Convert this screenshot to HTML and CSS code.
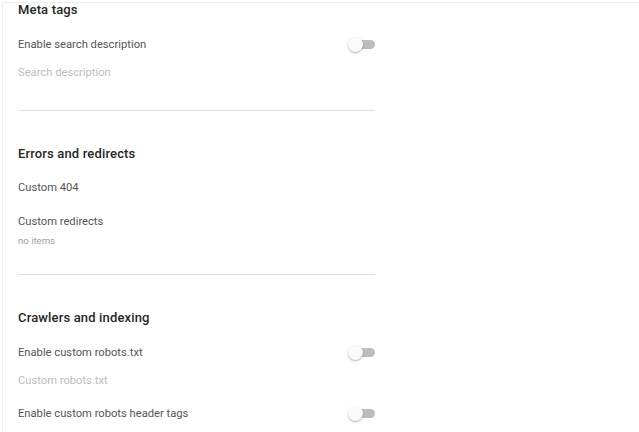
FILE: index.html
```html
<!DOCTYPE html>
<html>
<head>
<meta charset="utf-8">
<link rel="stylesheet" href="styles.css">
</head>
<body>
<div class="card">
  <section class="section">
    <h2 class="title">Meta tags</h2>
    <div class="row gap-13">
      <span class="label">Enable search description</span>
      <span class="toggle"><span class="track"></span><span class="thumb"></span></span>
    </div>
    <div class="row">
      <span class="hint">Search description</span>
    </div>
    <div class="divider d-24"></div>
  </section>
  <section class="section">
    <h2 class="title t-36">Errors and redirects</h2>
    <div class="row gap-12">
      <span class="label">Custom 404</span>
    </div>
    <div class="row gap-6">
      <span class="label">Custom redirects</span>
    </div>
    <div class="sub">no items</div>
    <div class="divider d-27"></div>
  </section>
  <section class="section">
    <h2 class="title t-36">Crawlers and indexing</h2>
    <div class="row gap-13">
      <span class="label">Enable custom robots.txt</span>
      <span class="toggle"><span class="track"></span><span class="thumb"></span></span>
    </div>
    <div class="row">
      <span class="hint">Custom robots.txt</span>
    </div>
    <div class="row gap-5">
      <span class="label">Enable custom robots header tags</span>
      <span class="toggle"><span class="track"></span><span class="thumb"></span></span>
    </div>
  </section>
</div>
</body>
</html>
```

FILE: styles.css
```css
html, body {
  margin: 0;
  padding: 0;
  height: 100%;
  background: #ffffff;
  font-family: Roboto, "Liberation Sans", Arial, sans-serif;
  overflow: hidden;
}

.card {
  box-sizing: border-box;
  margin: 2px 0 0 2px;
  border-top: 1px solid #eeeeee;
  border-left: 1px solid #eeeeee;
  padding: 0 0 0 15px;
  height: calc(100% - 2px);
  overflow: hidden;
}

.section {
  width: 357px;
}

.title {
  margin: 0;
  font-size: 13px;
  line-height: 14px;
  font-weight: 500;
  color: #262626;
  letter-spacing: 0.15px;
}

.t-36 { margin-top: 36px; }

.row {
  height: 28px;
  display: flex;
  align-items: center;
  justify-content: space-between;
}

.gap-13 { margin-top: 13px; }
.gap-12 { margin-top: 12px; }
.gap-6 { margin-top: 6px; }
.gap-5 { margin-top: 5px; }

.label {
  font-size: 11.2px;
  color: #545454;
}

.hint {
  font-size: 11.2px;
  color: #bdbdbd;
}

.sub {
  font-size: 9.6px;
  line-height: 12px;
  color: #9e9e9e;
}

.divider {
  height: 1px;
  background: #e0e0e0;
}

.d-24 { margin-top: 24px; }
.d-27 { margin-top: 27px; }

.toggle {
  position: relative;
  width: 27px;
  height: 15px;
  flex: none;
}

.track {
  position: absolute;
  left: 7px;
  right: 0;
  top: 3px;
  height: 9px;
  border-radius: 5px;
  background: #bdbdbd;
}

.thumb {
  position: absolute;
  left: 0;
  top: 0;
  width: 15px;
  height: 15px;
  border-radius: 50%;
  background: #fafafa;
  box-shadow: 0 1px 2px rgba(0, 0, 0, 0.3);
}
```
